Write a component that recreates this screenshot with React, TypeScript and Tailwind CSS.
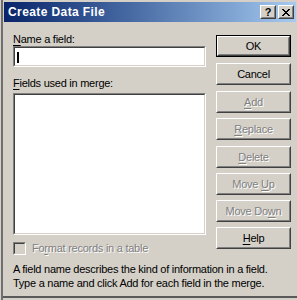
import React from 'react';

const Sunken: React.FC<{ className?: string; innerClassName?: string; children?: React.ReactNode }> = ({ className = '', innerClassName = '', children }) => (
  <div className={`border border-t-[#808080] border-l-[#808080] border-b-white border-r-white ${className}`}>
    <div className={`h-full w-full border border-t-[#404040] border-l-[#404040] border-b-[#D4D0C8] border-r-[#D4D0C8] ${innerClassName}`}>
      {children}
    </div>
  </div>
);

const Btn: React.FC<{ children: React.ReactNode; disabled?: boolean; isDefault?: boolean; className?: string }> = ({ children, disabled, isDefault, className = '' }) => {
  const face = (
    <div className="h-full w-full border border-t-white border-l-white border-b-[#404040] border-r-[#404040]">
      <div className="h-full w-full border border-t-[#D4D0C8] border-l-[#D4D0C8] border-b-[#808080] border-r-[#808080] flex items-center justify-center">
        <span className={disabled ? 'text-[#808080] [text-shadow:1px_1px_0_#fff]' : 'text-black'}>{children}</span>
      </div>
    </div>
  );
  return (
    <div className={`h-[22px] w-[75px] ${className}`}>
      {isDefault ? <div className="h-full w-full border border-black">{face}</div> : face}
    </div>
  );
};

const U: React.FC<{ children: React.ReactNode }> = ({ children }) => (
  <span className="underline underline-offset-[2px]">{children}</span>
);

const TitleBtn: React.FC<{ children: React.ReactNode }> = ({ children }) => (
  <div className="h-[14px] w-[16px] bg-[#D4D0C8] border border-t-white border-l-white border-b-[#404040] border-r-[#404040]">
    <div className="h-full w-full border border-t-[#D4D0C8] border-l-[#D4D0C8] border-b-[#808080] border-r-[#808080] flex items-center justify-center">
      {children}
    </div>
  </div>
);

export default function App() {
  return (
    <div className="w-[297px] h-[300px] bg-[#D4D0C8] flex overflow-hidden text-[11px] leading-[13px] tracking-[-0.25px] text-black font-['Liberation_Sans',Arial,sans-serif]">
      {/* left window edge */}
      <div className="w-[3px] h-full border-l border-l-[#D4D0C8] bg-[#6f6f6f]" />

      <div className="flex-1 flex flex-col pt-[2px]">
        {/* caption */}
        <div className="h-[20px] ml-[1px] mr-[1px] flex items-center justify-between pl-[4px] pr-[2px] bg-gradient-to-r from-[#0A246A] to-[#A6CAF0]">
          <span className="text-white font-bold text-[12px] tracking-[0.4px]">Create Data File</span>
          <div className="flex gap-[2px]">
            <TitleBtn>
              <span className="font-bold text-[11px] leading-none mt-[1px] tracking-normal">?</span>
            </TitleBtn>
            <TitleBtn>
              <svg width="8" height="7" viewBox="0 0 8 7" shapeRendering="crispEdges">
                <path d="M0 0h2v1h-2zM6 0h2v1h-2zM1 1h2v1h-2zM5 1h2v1h-2zM2 2h4v1h-4zM3 3h2v1h-2zM2 4h4v1h-4zM1 5h2v1h-2zM5 5h2v1h-2zM0 6h2v1h-2zM6 6h2v1h-2z" fill="#000" />
              </svg>
            </TitleBtn>
          </div>
        </div>

        {/* body */}
        <div className="flex pl-[10px]">
          <div className="w-[193px] flex flex-col">
            <div className="mt-[11px] h-[13px]"><U>N</U>ame a field:</div>
            <Sunken className="h-[21px] bg-white" innerClassName="relative">
              <div className="absolute left-[2px] top-[4px] w-[2px] h-[11px] bg-black" />
            </Sunken>
            <div className="mt-[10px] h-[13px]"><U>F</U>ields used in merge:</div>
            <Sunken className="mt-[3px] h-[142px] bg-white" />
            <div className="mt-[7px] h-[13px] flex items-center">
              <Sunken className="w-[13px] h-[13px] bg-[#D4D0C8]" />
              <span className="ml-[6px] text-[#808080] [text-shadow:1px_1px_0_#fff]">Fo<U>r</U>mat records in a table</span>
            </div>
          </div>

          <div className="ml-[10px] flex flex-col">
            <Btn isDefault className="mt-[13px]">OK</Btn>
            <Btn className="mt-[6px]">Cancel</Btn>
            <Btn disabled className="mt-[6px]"><U>A</U>dd</Btn>
            <Btn disabled className="mt-[5px]"><U>R</U>eplace</Btn>
            <Btn disabled className="mt-[6px]"><U>D</U>elete</Btn>
            <Btn disabled className="mt-[5px]">Move <U>U</U>p</Btn>
            <Btn disabled className="mt-[5px]">Move Do<U>w</U>n</Btn>
            <Btn className="mt-[5px]"><U>H</U>elp</Btn>
          </div>
        </div>

        <div className="pl-[10px] mt-[7px] leading-[14px]">
          <p>A field name describes the kind of information in a field.</p>
          <p>Type a name and click Add for each field in the merge.</p>
        </div>

        <div className="mt-auto h-[4px] border-t-2 border-t-[#5a5a5a]" />
      </div>
    </div>
  );
}
